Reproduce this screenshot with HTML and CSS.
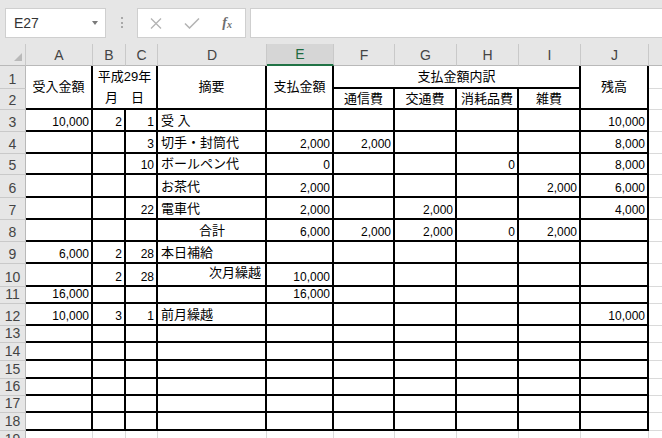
FILE: index.html
```html
<!DOCTYPE html>
<html lang="ja">
<head>
<meta charset="utf-8">
<title>Sheet</title>
<link rel="stylesheet" href="styles.css">
</head>
<body>
<div class="app">
  <div class="fbar">
    <div class="namebox"><span class="ref">E27</span><span class="caret"></span></div>
    <div class="dots"><i></i><i></i><i></i></div>
    <div class="fbtns">
      <span class="btn"><svg width="12" height="11" viewBox="0 0 12 11"><path d="M1 0.5 L11 10.5 M11 0.5 L1 10.5" stroke="#b3b3b3" stroke-width="1.3" fill="none"/></svg></span>
      <span class="btn"><svg width="16" height="11" viewBox="0 0 16 11"><path d="M1 5.5 L5.5 10 L15 0.5" stroke="#b3b3b3" stroke-width="1.5" fill="none"/></svg></span>
      <span class="btn fx">f<span class="sx">x</span></span>
    </div>
    <div class="finput"></div>
  </div>
  <table class="sheet">
    <colgroup>
      <col class="w-rh"><col class="w-a"><col class="w-b"><col class="w-c"><col class="w-d"><col class="w-e"><col class="w-f"><col class="w-g"><col class="w-h"><col class="w-i"><col class="w-j"><col class="w-k">
    </colgroup>
    <tr class="hdr">
      <th class="ch corner"><svg class="tri" width="26" height="21" viewBox="0 0 26 21"><polygon points="22,9 22,17 14,17" fill="#b9b9b9"/></svg></th>
      <th class="ch">A</th><th class="ch">B</th><th class="ch">C</th><th class="ch">D</th><th class="ch sel">E</th><th class="ch">F</th><th class="ch">G</th><th class="ch">H</th><th class="ch">I</th><th class="ch">J</th><th class="ch"></th>
    </tr>
    <tr class="h23">
      <th class="rh">1</th>
      <td class="b hd" rowspan="2">受入金額</td>
      <td class="b hd two" colspan="2" rowspan="2">平成29年<br>月　日</td>
      <td class="b hd" rowspan="2">摘要</td>
      <td class="b hd" rowspan="2">支払金額</td>
      <td class="b hd" colspan="4">支払金額内訳</td>
      <td class="b hd" rowspan="2">残高</td>
      <td></td>
    </tr>
    <tr class="h21">
      <th class="rh">2</th>
      <td class="b hd">通信費</td><td class="b hd">交通費</td><td class="b hd">消耗品費</td><td class="b hd">雑費</td>
      <td></td>
    </tr>
    <tr class="h22">
      <th class="rh">3</th>
      <td class="b n">10,000</td><td class="b n">2</td><td class="b n">1</td><td class="b t">受 入</td><td class="b n"></td><td class="b n"></td><td class="b n"></td><td class="b n"></td><td class="b n"></td><td class="b n">10,000</td><td></td>
    </tr>
    <tr class="h22">
      <th class="rh">4</th>
      <td class="b n"></td><td class="b n"></td><td class="b n">3</td><td class="b t">切手・封筒代</td><td class="b n">2,000</td><td class="b n">2,000</td><td class="b n"></td><td class="b n"></td><td class="b n"></td><td class="b n">8,000</td><td></td>
    </tr>
    <tr class="h21">
      <th class="rh">5</th>
      <td class="b n"></td><td class="b n"></td><td class="b n">10</td><td class="b t">ボールペン代</td><td class="b n">0</td><td class="b n"></td><td class="b n"></td><td class="b n">0</td><td class="b n"></td><td class="b n">8,000</td><td></td>
    </tr>
    <tr class="h23">
      <th class="rh">6</th>
      <td class="b n"></td><td class="b n"></td><td class="b n"></td><td class="b t">お茶代</td><td class="b n">2,000</td><td class="b n"></td><td class="b n"></td><td class="b n"></td><td class="b n">2,000</td><td class="b n">6,000</td><td></td>
    </tr>
    <tr class="h22">
      <th class="rh">7</th>
      <td class="b n"></td><td class="b n"></td><td class="b n">22</td><td class="b t">電車代</td><td class="b n">2,000</td><td class="b n"></td><td class="b n">2,000</td><td class="b n"></td><td class="b n"></td><td class="b n">4,000</td><td></td>
    </tr>
    <tr class="h22">
      <th class="rh">8</th>
      <td class="b n"></td><td class="b n"></td><td class="b n"></td><td class="b t ctr">合計</td><td class="b n">6,000</td><td class="b n">2,000</td><td class="b n">2,000</td><td class="b n">0</td><td class="b n">2,000</td><td class="b n"></td><td></td>
    </tr>
    <tr class="h22">
      <th class="rh">9</th>
      <td class="b n">6,000</td><td class="b n">2</td><td class="b n">28</td><td class="b t">本日補給</td><td class="b n"></td><td class="b n"></td><td class="b n"></td><td class="b n"></td><td class="b n"></td><td class="b n"></td><td></td>
    </tr>
    <tr class="h23">
      <th class="rh">10</th>
      <td class="b n"></td><td class="b n">2</td><td class="b n">28</td><td class="b t rt">次月繰越</td><td class="b n">10,000</td><td class="b n"></td><td class="b n"></td><td class="b n"></td><td class="b n"></td><td class="b n"></td><td></td>
    </tr>
    <tr class="h15">
      <th class="rh">11</th>
      <td class="b n">16,000</td><td class="b n"></td><td class="b n"></td><td class="b t"></td><td class="b n">16,000</td><td class="b n"></td><td class="b n"></td><td class="b n"></td><td class="b n"></td><td class="b n"></td><td></td>
    </tr>
    <tr class="h22">
      <th class="rh">12</th>
      <td class="b n">10,000</td><td class="b n">3</td><td class="b n">1</td><td class="b t">前月繰越</td><td class="b n"></td><td class="b n"></td><td class="b n"></td><td class="b n"></td><td class="b n"></td><td class="b n">10,000</td><td></td>
    </tr>
    <tr class="h17"><th class="rh">13</th><td class="b"></td><td class="b"></td><td class="b"></td><td class="b"></td><td class="b"></td><td class="b"></td><td class="b"></td><td class="b"></td><td class="b"></td><td class="b"></td><td></td></tr>
    <tr class="h18"><th class="rh">14</th><td class="b"></td><td class="b"></td><td class="b"></td><td class="b"></td><td class="b"></td><td class="b"></td><td class="b"></td><td class="b"></td><td class="b"></td><td class="b"></td><td></td></tr>
    <tr class="h18"><th class="rh">15</th><td class="b"></td><td class="b"></td><td class="b"></td><td class="b"></td><td class="b"></td><td class="b"></td><td class="b"></td><td class="b"></td><td class="b"></td><td class="b"></td><td></td></tr>
    <tr class="h17"><th class="rh">16</th><td class="b"></td><td class="b"></td><td class="b"></td><td class="b"></td><td class="b"></td><td class="b"></td><td class="b"></td><td class="b"></td><td class="b"></td><td class="b"></td><td></td></tr>
    <tr class="h17"><th class="rh">17</th><td class="b"></td><td class="b"></td><td class="b"></td><td class="b"></td><td class="b"></td><td class="b"></td><td class="b"></td><td class="b"></td><td class="b"></td><td class="b"></td><td></td></tr>
    <tr class="h18"><th class="rh">18</th><td class="b"></td><td class="b"></td><td class="b"></td><td class="b"></td><td class="b"></td><td class="b"></td><td class="b"></td><td class="b"></td><td class="b"></td><td class="b"></td><td></td></tr>
    <tr class="h18"><th class="rh">19</th><td></td><td></td><td></td><td></td><td></td><td></td><td></td><td></td><td></td><td></td><td></td></tr>
  </table>
</div>
</body>
</html>
```
FILE: styles.css
```css
html, body {
  margin: 0;
  padding: 0;
  background: #ffffff;
  overflow: hidden;
}
body {
  font-family: "Liberation Sans", "Noto Sans CJK JP", sans-serif;
}
.app {
  width: 662px;
  height: 438px;
  overflow: hidden;
  background: #e6e6e6;
}
.fbar {
  height: 44px;
  box-sizing: border-box;
  padding: 8px 0 0 5px;
  display: flex;
  align-items: flex-start;
}
.namebox {
  width: 101px;
  height: 30px;
  box-sizing: border-box;
  background: #ffffff;
  border: 1px solid #cfcfcf;
  display: flex;
  align-items: center;
  padding-left: 8px;
}
.ref {
  font-size: 14px;
  color: #333333;
}
.caret {
  margin-left: auto;
  margin-right: 7px;
  width: 0;
  height: 0;
  border-left: 3.5px solid transparent;
  border-right: 3.5px solid transparent;
  border-top: 4px solid #7a7a7a;
}
.dots {
  width: 31px;
  padding-top: 9px;
  display: flex;
  flex-direction: column;
  align-items: center;
  gap: 2.5px;
}
.dots i {
  display: block;
  width: 2px;
  height: 2px;
  background: #a8a8a8;
}
.fbtns {
  width: 109px;
  height: 30px;
  box-sizing: border-box;
  background: #ffffff;
  border: 1px solid #cfcfcf;
  display: flex;
  align-items: center;
}
.btn {
  width: 36px;
  display: flex;
  justify-content: center;
  align-items: center;
}
.fx {
  font-family: "Liberation Serif", serif;
  font-style: italic;
  font-weight: bold;
  font-size: 14px;
  color: #6e6e6e;
}
.sx {
  font-size: 10px;
  position: relative;
  top: 1px;
}
.finput {
  margin-left: 4px;
  flex: 1;
  height: 30px;
  box-sizing: border-box;
  background: #ffffff;
  border: 1px solid #cfcfcf;
  border-right: none;
}

.sheet {
  border-collapse: separate;
  border-spacing: 0;
  table-layout: fixed;
  width: 729px;
  background: #ffffff;
}
.w-rh { width: 26px; }
.w-a { width: 67px; }
.w-b { width: 33px; }
.w-c { width: 32px; }
.w-d { width: 109px; }
.w-e { width: 67px; }
.w-f { width: 61px; }
.w-g { width: 62px; }
.w-h { width: 62px; }
.w-i { width: 62px; }
.w-j { width: 68px; }
.w-k { width: 80px; }

.hdr { height: 21px; }
.h15 { height: 15px; }
.h17 { height: 17px; }
.h18 { height: 18px; }
.h21 { height: 21px; }
.h22 { height: 22px; }
.h23 { height: 23px; }

.ch {
  background: #e6e6e6;
  border-right: 1px solid #c9c9c9;
  border-bottom: 1px solid #b9b9b9;
  font-weight: normal;
  font-size: 14px;
  color: #444444;
  padding: 0;
  text-align: center;
  vertical-align: middle;
  box-sizing: border-box;
  line-height: 16px;
}
.ch.sel {
  background: #d6d6d6;
  color: #1e6b40;
  border-bottom: 2px solid #217346;
}
.corner {
  position: relative;
}
.tri {
  display: block;
}
.rh {
  background: #e6e6e6;
  border-right: 1px solid #b9b9b9;
  border-bottom: 1px solid #c9c9c9;
  font-weight: normal;
  font-size: 14px;
  color: #444444;
  padding: 0 0 1px 0;
  text-align: center;
  vertical-align: bottom;
  line-height: 15px;
  box-sizing: border-box;
  overflow: hidden;
}
.sheet td {
  border-right: 1px solid #dadada;
  border-bottom: 1px solid #dadada;
  padding: 0 2px 0 2px;
  box-sizing: border-box;
  font-size: 12px;
  line-height: 13px;
  vertical-align: bottom;
  white-space: nowrap;
  overflow: hidden;
  color: #000000;
}
.sheet td.b {
  border-right: 2px solid #000000;
  border-bottom: 2px solid #000000;
}
.sheet td.n {
  text-align: right;
  padding-bottom: 1px;
}
.sheet td.t {
  font-size: 13px;
  text-align: left;
  padding-left: 3px;
  padding-bottom: 3px;
}
.sheet td.ctr {
  text-align: center;
}
.sheet td.rt {
  text-align: right;
  padding-right: 4px;
  padding-bottom: 6px;
}
.sheet td.hd {
  font-size: 13px;
  text-align: center;
  vertical-align: middle;
  line-height: 16px;
}
.sheet td.two {
  line-height: 21px;
}
```
